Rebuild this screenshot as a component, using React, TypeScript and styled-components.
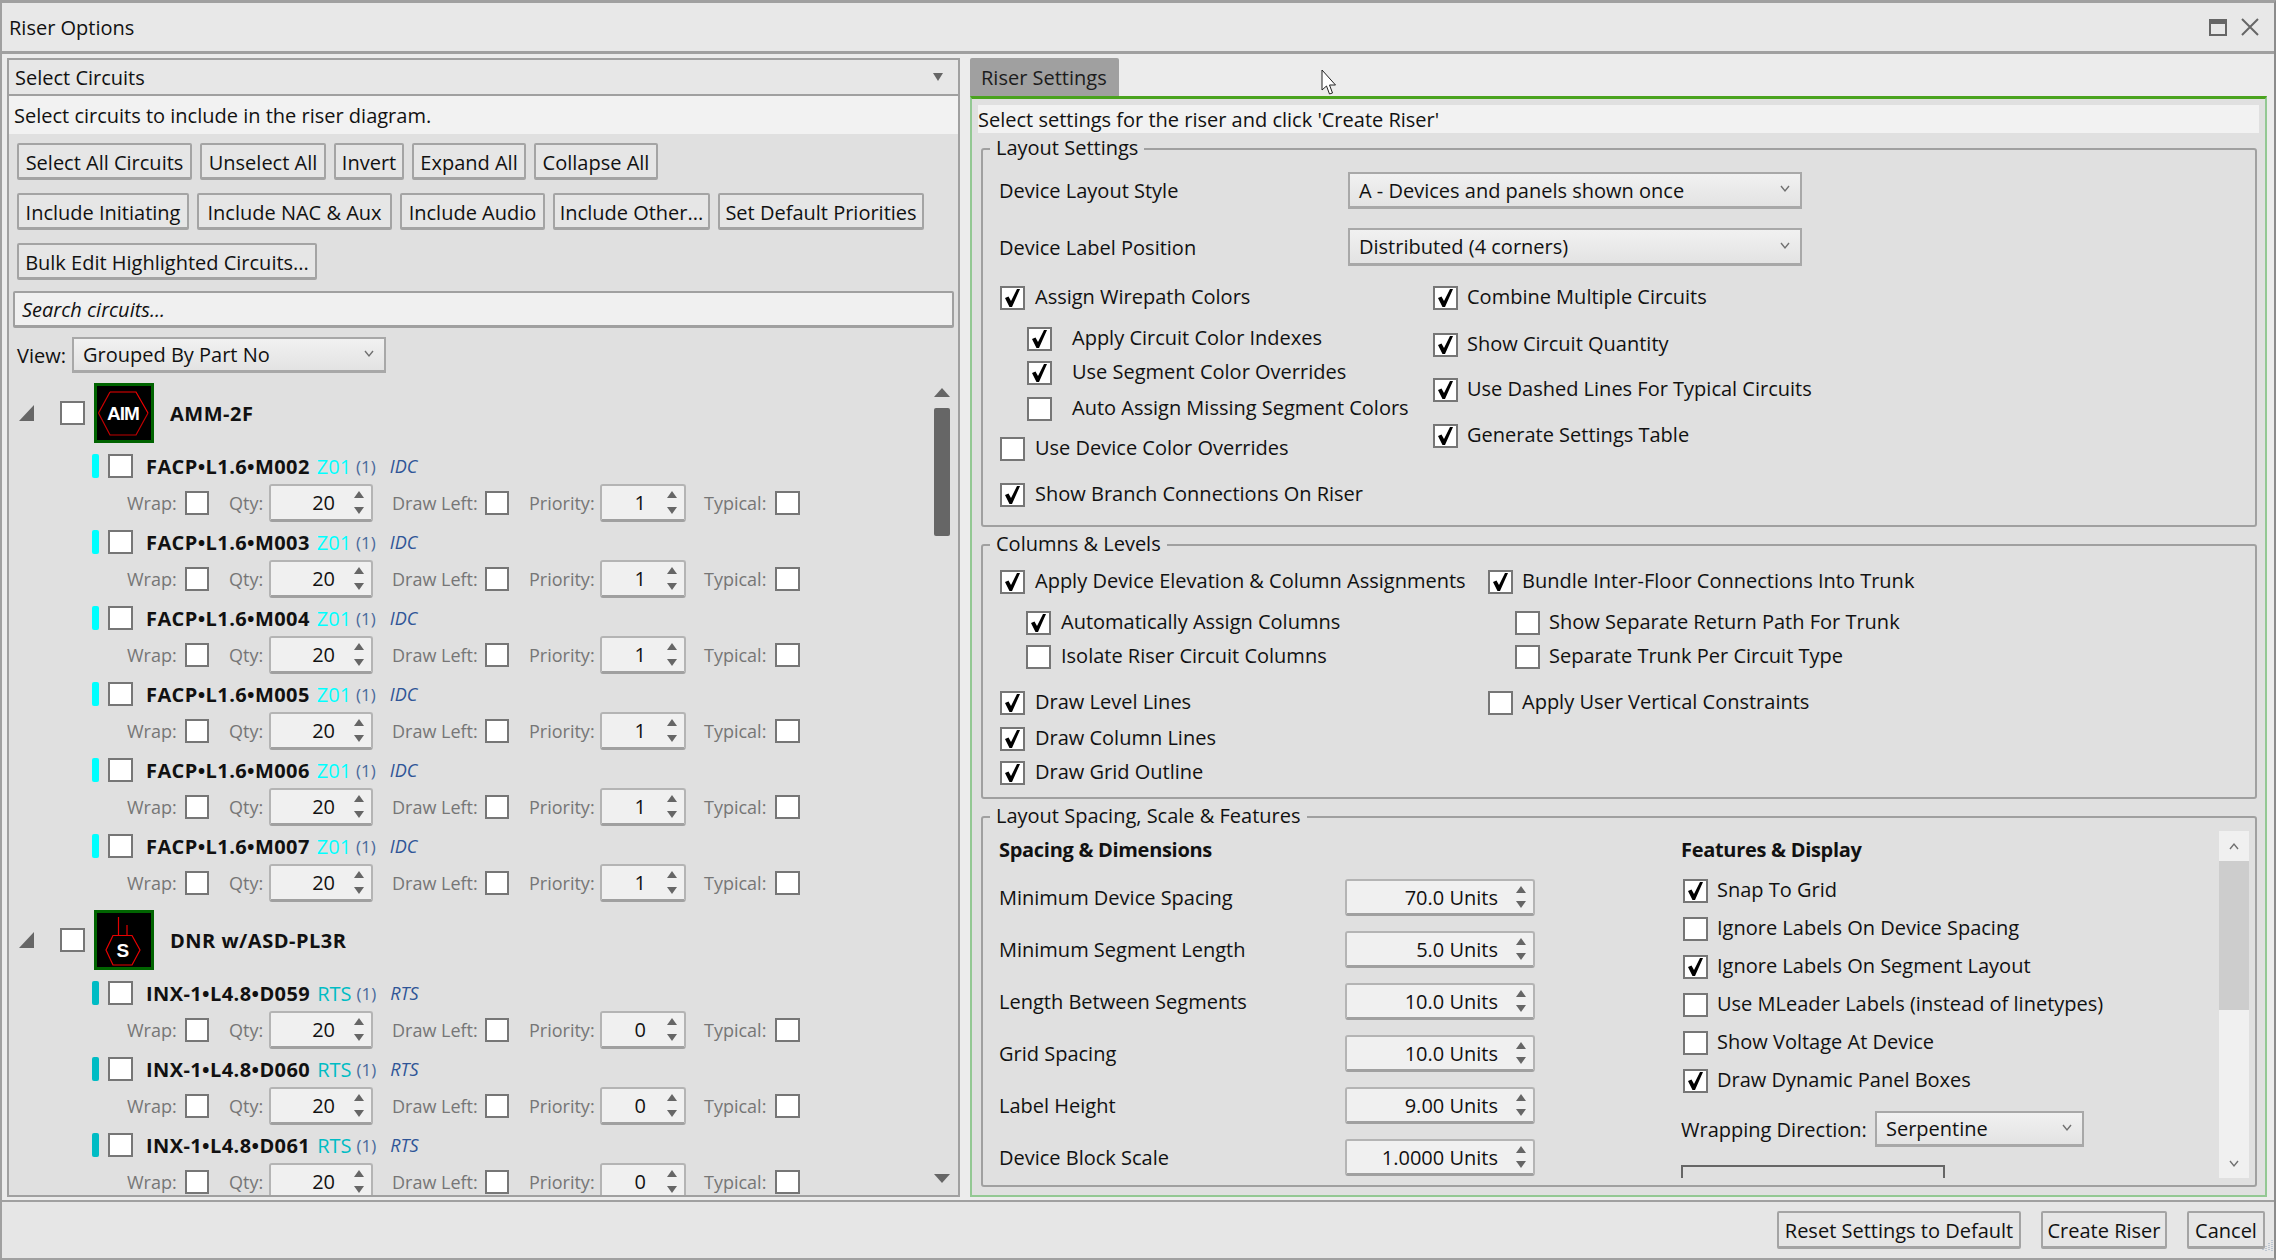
import { FC } from 'react';
import styled, { createGlobalStyle } from 'styled-components';

const GlobalStyle = createGlobalStyle`
  html, body {
    margin: 0;
    padding: 0;
    background: #ececec;
  }
  * {
    box-sizing: border-box;
  }
  body {
    font-family: "Open Sans", "Noto Sans", "Liberation Sans", sans-serif;
    font-size: 20px;
    color: #111;
    white-space: nowrap;
  }
`;

const Window = styled.div`
  position: relative;
  width: 2276px;
  height: 1260px;
  display: flex;
  flex-direction: column;
  overflow: hidden;
  background: #ececec;
  border-top: 3px solid #a0a0a0;
  border-left: 2px solid #a0a0a0;
  border-right: 2px solid #8c8c8c;
  border-bottom: 2px solid #a0a0a0;
`;

const TitleBar = styled.div`
  height: 51px;
  flex: none;
  display: flex;
  align-items: center;
  padding: 0 15px 0 7px;
  background: #e8e8e8;
  border-bottom: 3px solid #a0a0a0;
`;

const TitleText = styled.div`
  flex: 1;
`;

const TitleIcons = styled.div`
  display: flex;
  gap: 14px;
  align-items: center;
`;

const Body = styled.div`
  height: 1146px;
  flex: none;
  display: flex;
  padding: 4px 7px 0 5px;
  gap: 10px;
`;

const LeftPanel = styled.section`
  width: 953px;
  height: 1139px;
  flex: none;
  display: flex;
  flex-direction: column;
  background: #e0e0e0;
  border: 2px solid #a0a0a0;
`;

const PanelHeader = styled.div`
  height: 36px;
  flex: none;
  display: flex;
  align-items: center;
  justify-content: space-between;
  padding: 0 15px 0 6px;
  background: #e7e7e7;
  border-bottom: 2px solid #a0a0a0;
`;

const DownMark = styled.span`
  width: 0;
  height: 0;
  border-left: 5px solid transparent;
  border-right: 5px solid transparent;
  border-top: 8px solid #666;
`;

const HintBar = styled.div`
  height: 38px;
  flex: none;
  display: flex;
  align-items: center;
  padding-left: 5px;
  background: #f2f2f2;
`;

const Toolbar = styled.div<{ $mt: number }>`
  display: flex;
  gap: 8px;
  flex: none;
  padding-left: 8px;
  margin-top: ${(p) => p.$mt}px;
`;

const Button = styled.button<{ $w: number; $h?: number }>`
  width: ${(p) => p.$w}px;
  height: ${(p) => p.$h ?? 37}px;
  flex: none;
  padding: 2px 0 0;
  font: inherit;
  color: #111;
  background: #e6e6e6;
  border: 2px solid #a4a4a4;
  border-bottom-width: 3px;
  border-radius: 2px;
`;

const SearchBox = styled.div`
  height: 37px;
  flex: none;
  margin: 11px 4px 0 4px;
  display: flex;
  align-items: center;
  padding-left: 7px;
  font-style: italic;
  background: #f0f0f0;
  border: 2px solid #a0a0a0;
  border-bottom-width: 3px;
  border-radius: 2px;
`;

const ViewRow = styled.div`
  height: 36px;
  flex: none;
  margin-top: 9px;
  padding-left: 8px;
  display: flex;
  align-items: center;
`;

const Combo = styled.div<{ $w: number; $h: number }>`
  width: ${(p) => p.$w}px;
  height: ${(p) => p.$h}px;
  flex: none;
  display: flex;
  align-items: center;
  justify-content: space-between;
  padding: 0 10px 0 9px;
  background: linear-gradient(#f1f1f1, #e3e3e3);
  border: 2px solid #a8a8a8;
  border-bottom-width: 3px;

  svg {
    margin-bottom: 3px;
  }
`;

const ListArea = styled.div`
  flex: 1;
  min-height: 0;
  display: flex;
  margin-top: 6px;
`;

const Tree = styled.div`
  flex: 1;
  min-width: 0;
  overflow: hidden;
  padding-top: 4px;
`;

const GroupHead = styled.div`
  height: 60px;
  margin-bottom: 11px;
  display: flex;
  align-items: center;
  padding-left: 10px;
  font-weight: 700;
  letter-spacing: 0.5px;
`;

const Expander = styled.span`
  width: 15px;
  height: 16px;
  flex: none;
  margin: 0 26px 0 0;
  background: #666;
  clip-path: polygon(100% 0, 100% 100%, 0 100%);
`;

const BoxFrame = styled.span<{ $w?: number; $h?: number }>`
  width: ${(p) => p.$w ?? 25}px;
  height: ${(p) => p.$h ?? 24}px;
  flex: none;
  display: inline-block;
  background: #fff;
  border: 2px solid #767676;
  position: relative;

  svg {
    position: absolute;
    left: -2px;
    top: -2px;
  }
`;

const IconFrame = styled.span`
  width: 60px;
  height: 60px;
  flex: none;
  margin: 0 16px 0 9px;
  background: #000;
  border: 3px solid #006400;
  display: block;
`;

const CircuitBlock = styled.div`
  height: 76px;
  padding-left: 83px;
`;

const CircuitHead = styled.div`
  height: 24px;
  display: flex;
  align-items: center;
`;

const ColorBar = styled.span<{ $color: string }>`
  width: 7px;
  height: 24px;
  flex: none;
  margin-right: 9px;
  border-radius: 2px;
  background: ${(p) => p.$color};
`;

const CircuitName = styled.span`
  margin-left: 13px;
  font-weight: 700;
  letter-spacing: 0.4px;
`;

const ZoneName = styled.span<{ $color: string }>`
  margin-left: 7px;
  font-weight: 500;
  color: ${(p) => p.$color};
`;

const Count = styled.span`
  margin-left: 5px;
  font-size: 17px;
  color: #4a6a9c;
`;

const TypeName = styled.span`
  margin-left: 14px;
  font-size: 18px;
  font-style: italic;
  color: #2f5597;
`;

const CircuitFields = styled.div`
  margin: 6px 0 0 35px;
  display: grid;
  grid-template-columns: 58px 44px 40px 123px 93px 44px 71px 104px 71px 25px;
  align-items: center;
  height: 38px;
  font-size: 18px;
  color: #767676;
`;

const SpinBox = styled.div<{ $w: number; $h?: number; $right: number }>`
  width: ${(p) => p.$w}px;
  height: ${(p) => p.$h ?? 38}px;
  display: flex;
  align-items: center;
  justify-content: flex-end;
  position: relative;
  padding-right: ${(p) => p.$right}px;
  font-size: 20px;
  color: #111;
  background: #f0f0f0;
  border: 2px solid #b4b4b4;
  border-bottom: 3px solid #a0a0a0;
  border-radius: 3px;
`;

const SpinArrows = styled.span`
  position: absolute;
  right: 7px;
  top: 5px;
  bottom: 5px;
  display: flex;
  flex-direction: column;
  justify-content: space-between;
`;

const ArrowUp = styled.span`
  width: 0;
  height: 0;
  border-left: 5px solid transparent;
  border-right: 5px solid transparent;
  border-bottom: 7px solid #666;
`;

const ArrowDown = styled(ArrowUp)`
  border-bottom: 0;
  border-top: 7px solid #666;
`;

const ScrollColumn = styled.div`
  width: 24px;
  flex: none;
  margin-right: 4px;
  display: flex;
  flex-direction: column;
  align-items: center;
  padding: 9px 0 12px;
`;

const ScrollTriUp = styled.span`
  width: 0;
  height: 0;
  border-left: 8px solid transparent;
  border-right: 8px solid transparent;
  border-bottom: 9px solid #666;
`;

const ScrollTriDown = styled.span`
  width: 0;
  height: 0;
  margin-top: auto;
  border-left: 8px solid transparent;
  border-right: 8px solid transparent;
  border-top: 9px solid #666;
`;

const ScrollThumb = styled.span`
  width: 16px;
  height: 128px;
  margin-top: 11px;
  border-radius: 2px;
  background: #666;
`;

const RightColumn = styled.section`
  width: 1297px;
  flex: none;
  display: flex;
  flex-direction: column;
`;

const TabStrip = styled.div`
  height: 38px;
  flex: none;
`;

const Tab = styled.div`
  width: 149px;
  height: 38px;
  display: flex;
  align-items: center;
  padding-left: 11px;
  background: #a0a0a0;
  border-radius: 2px 2px 0 0;
  color: #1c1c1c;
`;

const RightPanel = styled.div`
  height: 1101px;
  flex: none;
  padding: 6px 6px 0 6px;
  background: #e0e0e0;
  border-top: 3px solid #4aa31e;
  border-left: 2px solid #93c893;
  border-right: 2px solid #93c893;
  border-bottom: 2px solid #93c893;
`;

const RightHint = styled.div`
  height: 28px;
  margin-bottom: 2px;
  display: flex;
  align-items: center;
  background: #f2f2f2;
`;

const Group = styled.fieldset<{ $h: number }>`
  height: ${(p) => p.$h}px;
  margin: 0 2px 4px 3px;
  min-width: 0;
  padding: 0;
  border: 2px solid #a0a0a0;
  border-radius: 3px;
`;

const GroupLegend = styled.legend`
  height: 28px;
  margin-left: 7px;
  padding: 0 6px;
  line-height: 26px;
`;

const GroupBody = styled.div<{ $pt: number }>`
  padding: ${(p) => p.$pt}px 0 0 16px;
`;

const FormRow = styled.div<{ $mt?: number }>`
  display: flex;
  align-items: center;
  margin-top: ${(p) => p.$mt ?? 0}px;
`;

const FormLabel = styled.span<{ $w: number }>`
  width: ${(p) => p.$w}px;
  flex: none;
`;

const CheckColumns = styled.div<{ $first: number }>`
  display: grid;
  grid-template-columns: ${(p) => p.$first}px 1fr;
  padding-left: 1px;
`;

const CheckRow = styled.label<{ $mt: number; $indent: number; $gap: number }>`
  height: 24px;
  display: flex;
  align-items: center;
  margin-top: ${(p) => p.$mt}px;
  padding-left: ${(p) => p.$indent}px;
  gap: ${(p) => p.$gap}px;
`;

const CheckText = styled.span`
  margin-bottom: 4px;
`;

const ScrollPane = styled.div`
  height: 347px;
  display: flex;
  margin-right: 6px;
`;

const PaneContent = styled.div`
  flex: 1;
  min-width: 0;
  overflow: hidden;
  display: grid;
  grid-template-columns: 682px 1fr;
  padding-left: 16px;
`;

const PaneTitle = styled.div`
  height: 28px;
  margin-top: 5px;
  margin-bottom: 1px;
  line-height: 28px;
  font-weight: 700;
  letter-spacing: -0.3px;
`;

const PaneBar = styled.div`
  width: 30px;
  flex: none;
  display: flex;
  flex-direction: column;
  background: #f0f0f0;
`;

const PaneBarButton = styled.span<{ $end?: boolean }>`
  height: 30px;
  flex: none;
  display: flex;
  align-items: center;
  justify-content: center;
  margin-top: ${(p) => (p.$end ? 'auto' : '0')};
`;

const PaneThumb = styled.span`
  height: 149px;
  flex: none;
  background: #cdcdcd;
`;

const PreviewBox = styled.div`
  width: 264px;
  height: 40px;
  margin-top: 18px;
  border: 2px solid #666;
  background: #e0e0e0;
`;

const FooterBar = styled.div`
  flex: 1;
  display: flex;
  justify-content: flex-end;
  gap: 20px;
  padding: 9px 9px 0 0;
  background: #e6e6e6;
  border-top: 2px solid #a0a0a0;
`;

const PointerWrap = styled.span`
  position: absolute;
  left: 1319px;
  top: 66px;
`;

const GripWrap = styled.span`
  position: absolute;
  right: 0;
  bottom: 0;
`;

const Tick: FC = () => (
  <svg width="25" height="24" viewBox="0 0 25 24">
    <path d="M5 12 L8.5 10.5 L11 15 L17 3 L20 3 L12 21 L9.5 21 Z" fill="#000" />
  </svg>
);

const Box: FC<{ on?: boolean; w?: number; h?: number }> = ({ on, w, h }) => (
  <BoxFrame $w={w} $h={h}>{on && <Tick />}</BoxFrame>
);

const Chevron: FC<{ up?: boolean }> = ({ up }) => (
  <svg width="10" height="9" viewBox="0 0 10 9">
    <path d={up ? 'M1 7 L5 2 L9 7' : 'M1 2 L5 7 L9 2'} fill="none" stroke="#707070" strokeWidth="1.4" />
  </svg>
);

const Spin: FC<{ value: string; w: number; h?: number; right: number }> = ({ value, w, h, right }) => (
  <SpinBox $w={w} $h={h} $right={right}>
    {value}
    <SpinArrows>
      <ArrowUp />
      <ArrowDown />
    </SpinArrows>
  </SpinBox>
);

const Check: FC<{ label: string; on?: boolean; mt: number; indent?: number; gap?: number }> = ({
  label,
  on,
  mt,
  indent = 0,
  gap = 10,
}) => (
  <CheckRow $mt={mt} $indent={indent} $gap={gap}>
    <Box on={on} />
    <CheckText>{label}</CheckText>
  </CheckRow>
);

const AimIcon: FC = () => (
  <svg width="54" height="54" viewBox="3 3 54 54">
    <path d="M16 9 L42 9 L54 30" fill="none" stroke="#f00000" strokeWidth="1.2" />
    <path d="M54 30 L42 52 L16 52 L4.5 30" fill="none" stroke="#c00000" strokeWidth="1.2" />
    <path d="M4.5 30 L16 9" fill="none" stroke="#d00000" strokeWidth="1.2" />
    <text x="29" y="37" textAnchor="middle" fontFamily="Liberation Sans" fontWeight="700" fontSize="19" fill="#fff" letterSpacing="-1">
      AIM
    </text>
  </svg>
);

const SmokeIcon: FC = () => (
  <svg width="54" height="54" viewBox="3 3 54 54">
    <path d="M24.5 7 V25 M33 15 V25.5" fill="none" stroke="#e00000" strokeWidth="1.2" />
    <path d="M19 25.5 L38 25.5 L46 40 L38 55 L19 55 L12 40 Z" fill="none" stroke="#e80000" strokeWidth="1.2" />
    <text x="29" y="47" textAnchor="middle" fontFamily="Liberation Sans" fontWeight="700" fontSize="19" fill="#fff">
      S
    </text>
  </svg>
);

type Circuit = { name: string; zone: string; type: string; priority: string };

const amCircuits: Circuit[] = ['M002', 'M003', 'M004', 'M005', 'M006', 'M007'].map((id) => ({
  name: `FACP•L1.6•${id}`,
  zone: 'Z01',
  type: 'IDC',
  priority: '1',
}));

const dnrCircuits: Circuit[] = ['D059', 'D060', 'D061'].map((id) => ({
  name: `INX-1•L4.8•${id}`,
  zone: 'RTS',
  type: 'RTS',
  priority: '0',
}));

const CircuitItem: FC<{ circuit: Circuit; color: string }> = ({ circuit, color }) => (
  <CircuitBlock>
    <CircuitHead>
      <ColorBar $color={color} />
      <Box />
      <CircuitName>{circuit.name}</CircuitName>
      <ZoneName $color={color}>{circuit.zone}</ZoneName>
      <Count>(1)</Count>
      <TypeName>{circuit.type}</TypeName>
    </CircuitHead>
    <CircuitFields>
      <span>Wrap:</span>
      <Box w={24} />
      <span>Qty:</span>
      <span>
        <Spin value="20" w={104} right={36} />
      </span>
      <span>Draw Left:</span>
      <Box w={24} />
      <span>Priority:</span>
      <span>
        <Spin value={circuit.priority} w={86} right={38} />
      </span>
      <span>Typical:</span>
      <Box />
    </CircuitFields>
  </CircuitBlock>
);

const spacingRows = [
  ['Minimum Device Spacing', '70.0 Units'],
  ['Minimum Segment Length', '5.0 Units'],
  ['Length Between Segments', '10.0 Units'],
  ['Grid Spacing', '10.0 Units'],
  ['Label Height', '9.00 Units'],
  ['Device Block Scale', '1.0000 Units'],
];

const featureRows: [string, boolean][] = [
  ['Snap To Grid', true],
  ['Ignore Labels On Device Spacing', false],
  ['Ignore Labels On Segment Layout', true],
  ['Use MLeader Labels (instead of linetypes)', false],
  ['Show Voltage At Device', false],
  ['Draw Dynamic Panel Boxes', true],
];

export default function App() {
  return (
    <Window>
      <GlobalStyle />
      <TitleBar>
        <TitleText>Riser Options</TitleText>
        <TitleIcons>
          <svg width="18" height="17" viewBox="0 0 18 17">
            <rect x="1" y="1" width="16" height="15" fill="none" stroke="#666" strokeWidth="2" />
            <rect x="0" y="0" width="18" height="5" fill="#666" />
          </svg>
          <svg width="18" height="18" viewBox="0 0 18 18">
            <path d="M1 1 L17 17 M17 1 L1 17" stroke="#666" strokeWidth="2" />
          </svg>
        </TitleIcons>
      </TitleBar>

      <Body>
        <LeftPanel>
          <PanelHeader>
            Select Circuits
            <DownMark />
          </PanelHeader>
          <HintBar>Select circuits to include in the riser diagram.</HintBar>
          <Toolbar $mt={9}>
            <Button $w={175}>Select All Circuits</Button>
            <Button $w={126}>Unselect All</Button>
            <Button $w={70}>Invert</Button>
            <Button $w={114}>Expand All</Button>
            <Button $w={124}>Collapse All</Button>
          </Toolbar>
          <Toolbar $mt={13}>
            <Button $w={172}>Include Initiating</Button>
            <Button $w={195}>Include NAC &amp; Aux</Button>
            <Button $w={145}>Include Audio</Button>
            <Button $w={157}>Include Other...</Button>
            <Button $w={206}>Set Default Priorities</Button>
          </Toolbar>
          <Toolbar $mt={13}>
            <Button $w={300}>Bulk Edit Highlighted Circuits...</Button>
          </Toolbar>
          <SearchBox>Search circuits...</SearchBox>
          <ViewRow>
            <FormLabel $w={55}>View:</FormLabel>
            <Combo $w={314} $h={36}>
              Grouped By Part No
              <Chevron />
            </Combo>
          </ViewRow>
          <ListArea>
            <Tree>
              <GroupHead>
                <Expander />
                <Box />
                <IconFrame>
                  <AimIcon />
                </IconFrame>
                AMM-2F
              </GroupHead>
              {amCircuits.map((c) => (
                <CircuitItem key={c.name} circuit={c} color="#00ffff" />
              ))}
              <GroupHead>
                <Expander />
                <Box />
                <IconFrame>
                  <SmokeIcon />
                </IconFrame>
                DNR w/ASD-PL3R
              </GroupHead>
              {dnrCircuits.map((c) => (
                <CircuitItem key={c.name} circuit={c} color="#00bcc4" />
              ))}
            </Tree>
            <ScrollColumn>
              <ScrollTriUp />
              <ScrollThumb />
              <ScrollTriDown />
            </ScrollColumn>
          </ListArea>
        </LeftPanel>

        <RightColumn>
          <TabStrip>
            <Tab>Riser Settings</Tab>
          </TabStrip>
          <RightPanel>
            <RightHint>Select settings for the riser and click 'Create Riser'</RightHint>
            <Group $h={392}>
              <GroupLegend>Layout Settings</GroupLegend>
              <GroupBody $pt={9}>
                <FormRow>
                  <FormLabel $w={349}>Device Layout Style</FormLabel>
                  <Combo $w={454} $h={37}>
                    A - Devices and panels shown once
                    <Chevron />
                  </Combo>
                </FormRow>
                <FormRow $mt={19}>
                  <FormLabel $w={349}>Device Label Position</FormLabel>
                  <Combo $w={454} $h={38}>
                    Distributed (4 corners)
                    <Chevron />
                  </Combo>
                </FormRow>
                <CheckColumns $first={433}>
                  <div>
                    <Check label="Assign Wirepath Colors" on mt={20} />
                    <Check label="Apply Circuit Color Indexes" on mt={17} indent={27} gap={20} />
                    <Check label="Use Segment Color Overrides" on mt={10} indent={27} gap={20} />
                    <Check label="Auto Assign Missing Segment Colors" mt={12} indent={27} gap={20} />
                    <Check label="Use Device Color Overrides" mt={16} />
                    <Check label="Show Branch Connections On Riser" on mt={22} />
                  </div>
                  <div>
                    <Check label="Combine Multiple Circuits" on mt={20} gap={9} />
                    <Check label="Show Circuit Quantity" on mt={23} gap={9} />
                    <Check label="Use Dashed Lines For Typical Circuits" on mt={21} gap={9} />
                    <Check label="Generate Settings Table" on mt={22} gap={9} />
                  </div>
                </CheckColumns>
              </GroupBody>
            </Group>
            <Group $h={268}>
              <GroupLegend>Columns &amp; Levels</GroupLegend>
              <GroupBody $pt={0}>
                <CheckColumns $first={488}>
                  <div>
                    <Check label="Apply Device Elevation & Column Assignments" on mt={11} />
                    <Check label="Automatically Assign Columns" on mt={17} indent={26} />
                    <Check label="Isolate Riser Circuit Columns" mt={10} indent={26} />
                    <Check label="Draw Level Lines" on mt={22} />
                    <Check label="Draw Column Lines" on mt={12} />
                    <Check label="Draw Grid Outline" on mt={10} />
                  </div>
                  <div>
                    <Check label="Bundle Inter-Floor Connections Into Trunk" on mt={11} gap={9} />
                    <Check label="Show Separate Return Path For Trunk" mt={17} indent={27} gap={9} />
                    <Check label="Separate Trunk Per Circuit Type" mt={10} indent={27} gap={9} />
                    <Check label="Apply User Vertical Constraints" mt={22} gap={9} />
                  </div>
                </CheckColumns>
              </GroupBody>
            </Group>
            <Group $h={384}>
              <GroupLegend>Layout Spacing, Scale &amp; Features</GroupLegend>
              <ScrollPane>
                <PaneContent>
                  <div>
                    <PaneTitle>Spacing &amp; Dimensions</PaneTitle>
                    {spacingRows.map(([label, value]) => (
                      <FormRow key={label} $mt={15}>
                        <FormLabel $w={346}>{label}</FormLabel>
                        <Spin value={value} w={190} h={37} right={35} />
                      </FormRow>
                    ))}
                  </div>
                  <div>
                    <PaneTitle>Features &amp; Display</PaneTitle>
                    {featureRows.map(([label, on], i) => (
                      <Check key={label} label={label} on={on} mt={i === 0 ? 15 : 14} indent={2} gap={9} />
                    ))}
                    <FormRow $mt={18}>
                      <FormLabel $w={194}>Wrapping Direction:</FormLabel>
                      <Combo $w={209} $h={36}>
                        Serpentine
                        <Chevron />
                      </Combo>
                    </FormRow>
                    <PreviewBox />
                  </div>
                </PaneContent>
                <PaneBar>
                  <PaneBarButton>
                    <Chevron up />
                  </PaneBarButton>
                  <PaneThumb />
                  <PaneBarButton $end>
                    <Chevron />
                  </PaneBarButton>
                </PaneBar>
              </ScrollPane>
            </Group>
          </RightPanel>
        </RightColumn>
      </Body>

      <FooterBar>
        <Button $w={244} $h={38}>Reset Settings to Default</Button>
        <Button $w={126} $h={38}>Create Riser</Button>
        <Button $w={78} $h={38}>Cancel</Button>
      </FooterBar>

      <PointerWrap>
        <svg width="16" height="28" viewBox="0 0 16 28">
          <path d="M1 1 L1 21 L5.5 17 L8.5 25 L11.5 24 L8.5 16 L14.5 16 Z" fill="#fff" stroke="#222" strokeWidth="1" />
        </svg>
      </PointerWrap>
      <GripWrap>
        <svg width="14" height="14" viewBox="0 0 14 14">
          <path d="M12 2 V13 M9 5 V13 M6 8 V13 M3 11 V13" stroke="#9fb0c4" strokeWidth="1.2" strokeDasharray="1 1" />
        </svg>
      </GripWrap>
    </Window>
  );
}
